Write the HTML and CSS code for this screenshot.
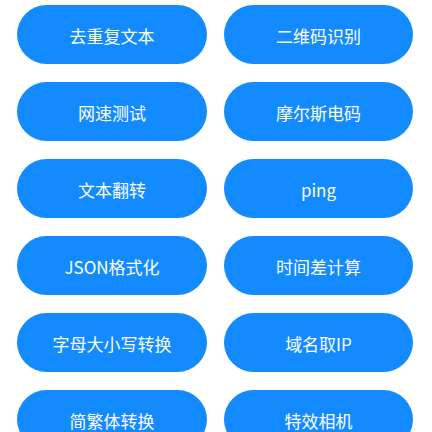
FILE: index.html
```html
<!DOCTYPE html>
<html lang="zh">
    <head>
        <meta charset="UTF-8">
        <meta name="viewport" content="width=device-width, initial-scale=1.0">
        <title>工具</title>
        <link rel="stylesheet" href="styles.css">
    </head>

    <body>
        <div class="tool-grid">
            <button class="tool-btn">去重复文本</button>
            <button class="tool-btn">二维码识别</button>
            <button class="tool-btn">网速测试</button>
            <button class="tool-btn">摩尔斯电码</button>
            <button class="tool-btn">文本翻转</button>
            <button class="tool-btn">ping</button>
            <button class="tool-btn">JSON格式化</button>
            <button class="tool-btn">时间差计算</button>
            <button class="tool-btn">字母大小写转换</button>
            <button class="tool-btn">域名取IP</button>
            <button class="tool-btn">简繁体转换</button>
            <button class="tool-btn">特效相机</button>
        </div>
    </body>
</html>
```

FILE: styles.css
```css
body{
    margin: 0;
    background-color: #fff;
    font-family: "Noto Sans CJK SC", "Noto Sans", sans-serif;
    overflow: hidden;
}
.tool-grid{
    display: grid;
    grid-template-columns: 190px 189px;
    grid-auto-rows: 59px;
    column-gap: 17px;
    row-gap: 18px;
    padding: 4.5px 0 0 17px;
}
.tool-btn{
    border: none;
    border-radius: 30px;
    background-color: #138bff;
    color: #fff;
    font-family: inherit;
    font-size: 17px;
    padding: 2px 0 0 0;
}
```
